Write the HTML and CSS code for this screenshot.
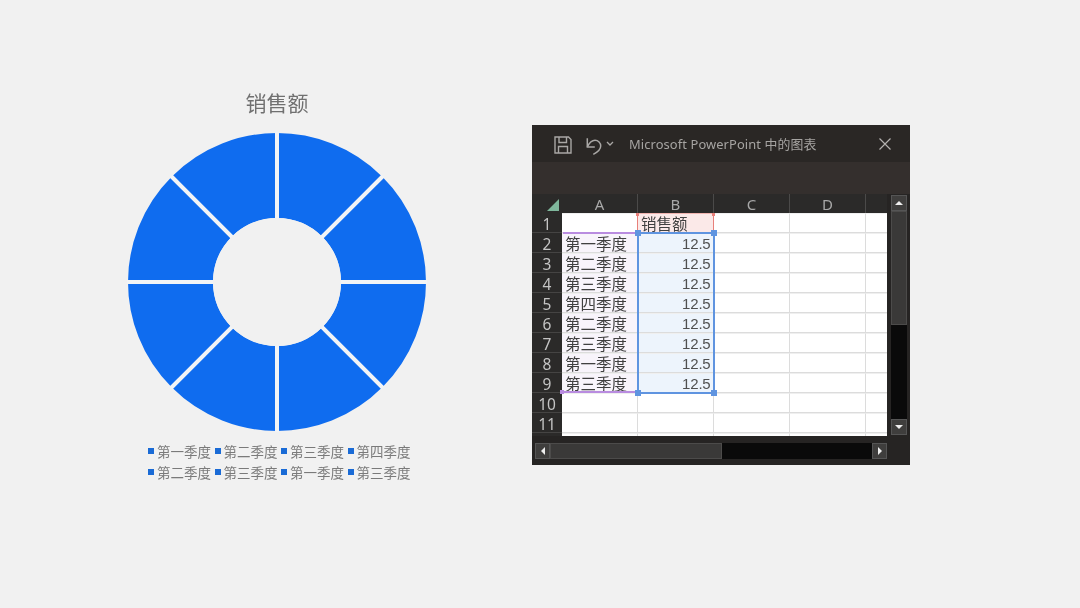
FILE: index.html
```html
<!DOCTYPE html>
<html lang="zh-CN">
<head>
<meta charset="utf-8">
<title>销售额</title>
<link rel="stylesheet" href="styles.css">
</head>
<body>
<main class="slide">
  <section class="chart">
    <h1 class="chart-title">销售额</h1>
    <svg class="donut" width="300" height="300" viewBox="0 0 300 300">
      <circle cx="150" cy="150" r="106.5" fill="none" stroke="#0f6cef" stroke-width="85"/>
      <g stroke="#f2f4f6" stroke-width="4">
        <line x1="150" y1="0" x2="150" y2="300"/>
        <line x1="0" y1="150" x2="300" y2="150"/>
        <line x1="44" y1="44" x2="256" y2="256"/>
        <line x1="256" y1="44" x2="44" y2="256"/>
      </g>
      <circle cx="150" cy="150" r="64" fill="#f1f1f1"/>
    </svg>
    <ul class="legend">
      <li>第一季度</li><li>第二季度</li><li>第三季度</li><li>第四季度</li>
      <li>第二季度</li><li>第三季度</li><li>第一季度</li><li>第三季度</li>
    </ul>
  </section>

  <section class="window">
    <header class="titlebar">
      <svg class="ico save" width="20" height="20" viewBox="0 0 20 20" fill="none" stroke="#a9a7a5" stroke-width="1.4">
        <path d="M2 2h13.500l2.500 2.500V18H2z"/>
        <path d="M6 2v5.500h7.500V2"/>
        <path d="M5.500 18v-6.500h9V18"/>
      </svg>
      <svg class="ico undo" width="18" height="20" viewBox="0 0 18 20" fill="none" stroke="#a9a7a5" stroke-width="1.5">
        <path d="M3.300 3.300V12h7.500"/>
        <path d="M3.300 12C5.500 7.500 8 5.300 11 5.300c3.200 0 5.700 2.600 5.700 5.700 0 3.600-3.400 6.300-7.400 8.300"/>
      </svg>
      <svg class="ico chev" width="8" height="5" viewBox="0 0 8 5" fill="none" stroke="#a9a7a5" stroke-width="1.3">
        <path d="M1 1l3 3 3-3"/>
      </svg>
      <span class="wintitle">Microsoft PowerPoint 中的图表</span>
      <svg class="ico close" width="12" height="12" viewBox="0 0 12 12" fill="none" stroke="#b3b1af" stroke-width="1.2">
        <path d="M.5.500l11 11M11.500.5l-11 11"/>
      </svg>
    </header>
    <div class="ribbon"></div>
    <div class="workspace">
      <div class="sheet">
        <div class="corner"><span class="tri"></span></div>
        <div class="colh">A</div><div class="colh">B</div><div class="colh">C</div><div class="colh">D</div><div class="colh end"></div>

        <div class="rowh">1</div><div class="c"></div><div class="c head">销售额</div><div class="c"></div><div class="c"></div><div class="c end"></div>
        <div class="rowh">2</div><div class="c cat">第一季度</div><div class="c val">12.5</div><div class="c"></div><div class="c"></div><div class="c end"></div>
        <div class="rowh">3</div><div class="c cat">第二季度</div><div class="c val">12.5</div><div class="c"></div><div class="c"></div><div class="c end"></div>
        <div class="rowh">4</div><div class="c cat">第三季度</div><div class="c val">12.5</div><div class="c"></div><div class="c"></div><div class="c end"></div>
        <div class="rowh">5</div><div class="c cat">第四季度</div><div class="c val">12.5</div><div class="c"></div><div class="c"></div><div class="c end"></div>
        <div class="rowh">6</div><div class="c cat">第二季度</div><div class="c val">12.5</div><div class="c"></div><div class="c"></div><div class="c end"></div>
        <div class="rowh">7</div><div class="c cat">第三季度</div><div class="c val">12.5</div><div class="c"></div><div class="c"></div><div class="c end"></div>
        <div class="rowh">8</div><div class="c cat">第一季度</div><div class="c val">12.5</div><div class="c"></div><div class="c"></div><div class="c end"></div>
        <div class="rowh">9</div><div class="c cat">第三季度</div><div class="c val">12.5</div><div class="c"></div><div class="c"></div><div class="c end"></div>
        <div class="rowh">10</div><div class="c"></div><div class="c"></div><div class="c"></div><div class="c"></div><div class="c end"></div>
        <div class="rowh">11</div><div class="c"></div><div class="c"></div><div class="c"></div><div class="c"></div><div class="c end"></div>
        <div class="rowh stub"></div><div class="c stub"></div><div class="c stub"></div><div class="c stub"></div><div class="c stub"></div><div class="c stub end"></div>

        <div class="sel sel-red"><i class="h tl"></i><i class="h tr"></i></div>
        <div class="sel sel-purple"><i class="h bl"></i></div>
        <div class="sel sel-blue"><i class="h tl"></i><i class="h tr"></i><i class="h bl"></i><i class="h br"></i></div>
      </div>
      <div class="vscroll">
        <div class="btn"><span class="arr up"></span></div>
        <div class="vthumb"></div>
        <div class="vtrack"></div>
        <div class="btn"><span class="arr down"></span></div>
      </div>
    </div>
    <div class="hscroll">
      <div class="btn"><span class="arr left"></span></div>
      <div class="hthumb"></div>
      <div class="htrack"></div>
      <div class="btn"><span class="arr right"></span></div>
    </div>
  </section>
</main>
</body>
</html>
```

FILE: styles.css
```css
* { box-sizing: border-box; }
html, body { margin: 0; padding: 0; }
body { width: 1080px; height: 608px; overflow: hidden; background: #f1f1f1; }
.slide {
  width: 1080px; height: 608px; display: flex; align-items: flex-start;
  padding: 89px 0 0 127px; background: #f1f1f1;
  font-family: "Noto Sans", "Noto Sans CJK SC", sans-serif;
  filter: blur(.3px);
}

/* chart */
.chart { width: 300px; display: flex; flex-direction: column; align-items: center; }
.chart-title {
  margin: 0; height: 42.500px; line-height: 27px; font-size: 21px; font-weight: 400;
  color: #707070; font-family: "Noto Sans CJK SC", sans-serif;
}
.donut { display: block; }
.legend {
  list-style: none; margin: 9px 0 0 8px; padding: 0; display: grid;
  grid-template-columns: repeat(4, 66.500px); grid-auto-rows: 21px; width: 266px;
  font-size: 13.500px; line-height: 21px; color: #7a7a7a; font-family: "Noto Sans CJK SC", sans-serif;
}
.legend li { display: flex; align-items: center; gap: 3px; white-space: nowrap; }
.legend li::before { content: ""; width: 6px; height: 6px; background: #1a6bd6; flex: none; }

/* window */
.window {
  width: 378px; height: 340px; margin: 36px 0 0 105px; background: #262423;
  display: flex; flex-direction: column;
  color: #aaa;
}
.titlebar { height: 37px; flex: none; display: flex; align-items: center; padding: 0 19px 0 21px; background: #2a2725; }
.ico { flex: none; display: block; }
.save, .undo { margin-top: 3px; }
.undo { margin-left: 11px; }
.chev { margin-left: 4px; }
.wintitle { margin: -1px 0 0 15px; flex: 1; font-size: 12.900px; color: #a6a4a2; white-space: nowrap; letter-spacing: .1px; }
.ribbon { height: 32px; flex: none; background: #342f2d; }
.workspace { flex: none; height: 242px; display: flex; }

.sheet {
  position: relative; width: 355px; height: 242px; display: grid;
  grid-template-columns: 30px 76px 76px 76px 76px 21px;
  grid-template-rows: 19px repeat(11, 20px) 3px;
  background: #fff;
}
.corner, .colh, .rowh { background: #2b2a29; color: #b4b4b4; }
.corner { position: relative; }
.tri {
  position: absolute; right: 3px; bottom: 2px; width: 0; height: 0;
  border-left: 12px solid transparent; border-bottom: 12px solid #7fb79c;
}
.colh {
  display: flex; align-items: center; justify-content: center; font-size: 15px; line-height: 18px;
  border-right: 1px solid #4b4a49; color: #a8a8a8;
}
.colh.end { border-right: 0; }
.rowh {
  display: flex; align-items: center; justify-content: center; font-size: 15.500px; line-height: 20px; padding-top: 2px;
  color: #c4c4c4; border-bottom: 1px solid #454443;
}
.rowh.stub { border: 0; padding: 0; }
.c {
  background: #fff; border-right: 1px solid #dcdcdc; border-top: 1px solid #efefef; border-bottom: 1px solid #dcdcdc;
  font-family: "Noto Sans CJK SC", sans-serif; font-size: 15.500px; line-height: 19px; color: #404040;
  white-space: nowrap; overflow: hidden;
}
.c.end { border-right: 0; }
.c.stub { border-bottom: 0; }
.cat { background: #f8f4fb; padding-left: 3px; }
.val { background: #edf4fc; text-align: right; padding-right: 2.500px; font-family: "Liberation Sans", sans-serif; font-size: 15px; line-height: 20px; color: #505050; letter-spacing: -.2px; }
.head { background: #fbe9e8; padding-left: 3px; }

.sel { position: absolute; }
.sel-red { left: 105px; top: 19px; width: 77px; height: 20px; border-left: 1px solid #e8807a; border-right: 1px solid #e8807a; border-top: 1px solid #f0b5b0; }
.sel-purple { left: 31px; top: 38px; width: 75px; height: 161px; border-top: 2px solid #b98ce0; border-bottom: 2px solid #b98ce0; }
.sel-blue { left: 105px; top: 38px; width: 78px; height: 162px; border: 2px solid #5f94e0; }
.h { position: absolute; width: 6px; height: 6px; background: #5f94e0; }
.sel-red .h { background: #e8807a; width: 3px; height: 3px; }
.sel-red .tl { left: -2px; top: -1px; }
.sel-red .tr { right: -2px; top: -1px; }
.sel-purple .bl { left: -3px; bottom: -3px; width: 4px; height: 4px; background: #b98ce0; }
.sel-blue .tl { left: -4px; top: -4px; }
.sel-blue .tr { right: -4px; top: -4px; }
.sel-blue .bl { left: -4px; bottom: -4px; }
.sel-blue .br { right: -4px; bottom: -4px; }

/* scrollbars */
.vscroll { width: 17px; margin-left: 4px; padding-top: 1px; display: flex; flex-direction: column; height: 241px; }
.btn { flex: none; width: 16px; height: 16px; background: #3f3e3d; border: 1px solid #555; display: flex; align-items: center; justify-content: center; }
.vthumb { height: 114px; flex: none; width: 16px; background: #3a3938; border: 1px solid #4c4b4a; }
.vtrack { flex: 1; width: 16px; background: #0a0a0a; }
.arr { width: 0; height: 0; display: block; }
.arr.up { border-left: 4px solid transparent; border-right: 4px solid transparent; border-bottom: 4px solid #eee; }
.arr.down { border-left: 4px solid transparent; border-right: 4px solid transparent; border-top: 4px solid #eee; }
.arr.left { border-top: 4px solid transparent; border-bottom: 4px solid transparent; border-right: 4px solid #eee; }
.arr.right { border-top: 4px solid transparent; border-bottom: 4px solid transparent; border-left: 4px solid #eee; }
.hscroll { margin: 7px 0 0 3px; width: 352px; height: 16px; display: flex; }
.hscroll .btn { width: 15px; }
.hthumb { width: 172px; flex: none; background: #3a3938; border: 1px solid #4c4b4a; }
.htrack { flex: 1; background: #0a0a0a; }
```
